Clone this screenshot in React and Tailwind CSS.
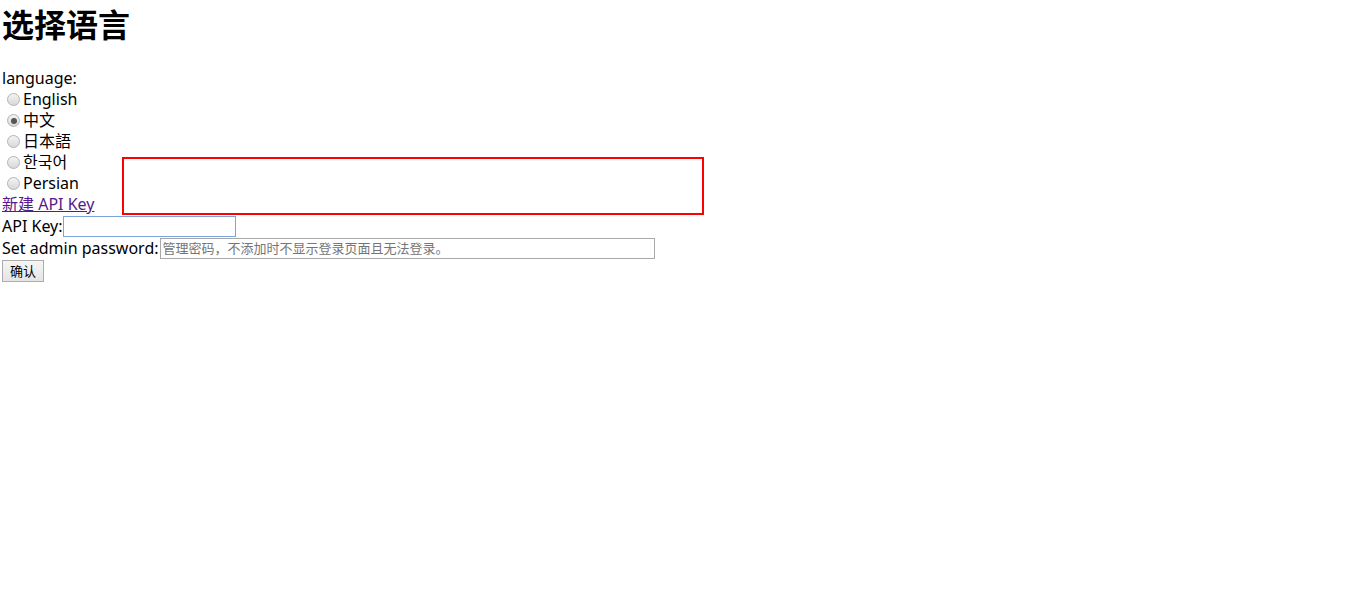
import React, { useState } from 'react';

const languages = [
  { value: 'en', label: 'English' },
  { value: 'zh', label: '中文' },
  { value: 'ja', label: '日本語' },
  { value: 'ko', label: '한국어' },
  { value: 'fa', label: 'Persian' },
];

const font = { fontFamily: '"Noto Sans", "Noto Sans CJK SC", sans-serif' };

function Radio({ checked, onChange }) {
  return (
    <span
      onClick={onChange}
      className="ml-[5px] mr-[3px] flex h-[13px] w-[13px] items-center justify-center rounded-full border border-[#b4b4b4] bg-gradient-to-b from-[#f4f4f4] to-[#d8d8d8]"
    >
      {checked && <span className="h-[6px] w-[6px] rounded-full bg-[#555555]" />}
    </span>
  );
}

export default function App() {
  const [lang, setLang] = useState('zh');

  return (
    <div className="relative min-h-[600px] bg-white pl-[2px] text-[16px] leading-[21px] text-black" style={font}>
      <h1 className="pt-[4px] text-[32px] font-bold leading-[42px]">选择语言</h1>
      <div className="mt-[22px]">language:</div>
      <div className="flex flex-col">
        {languages.map((l) => (
          <label key={l.value} className="flex h-[21px] items-center">
            <Radio checked={lang === l.value} onChange={() => setLang(l.value)} />
            <span>{l.label}</span>
          </label>
        ))}
      </div>
      <a href="#" className="block h-[21px] text-[#551a8b] underline">
        新建 API Key
      </a>
      <div className="flex h-[22px] items-center">
        <span>API Key:</span>
        <input
          type="text"
          className="h-[21px] w-[173px] border border-[#7ea4e0] px-[2px] text-[13px] outline-none"
        />
      </div>
      <div className="flex h-[23px] items-center">
        <span className="pr-[1px]">Set admin password:</span>
        <input
          type="password"
          placeholder="管理密码，不添加时不显示登录页面且无法登录。"
          className="h-[21px] w-[495px] border border-[#a9a9a9] px-[2px] text-[13px] outline-none placeholder:text-[#757575]"
        />
      </div>
      <button className="h-[22px] border border-[#adadad] bg-gradient-to-b from-[#f6f6f6] to-[#e4e4e4] px-[7px] text-[13px] leading-[18px]">
        确认
      </button>

      <div className="pointer-events-none absolute left-[122px] top-[157px] h-[58px] w-[582px] border-2 border-[#ff0000]" />
    </div>
  );
}
